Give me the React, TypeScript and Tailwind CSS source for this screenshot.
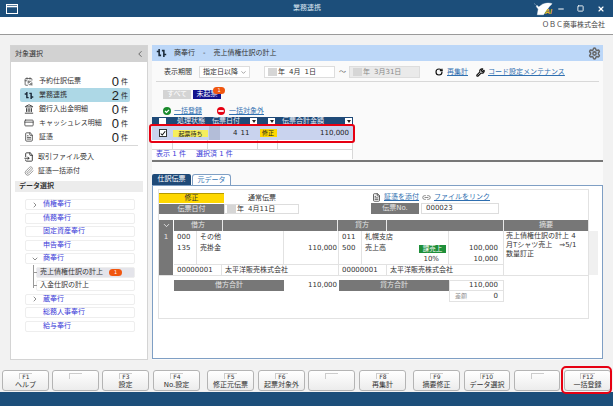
import { CalendarSync, ChevronDown, ChevronRight, ChevronLeft, CreditCard, FileInput, FileText, Landmark, Link2, Minus, Paperclip, RotateCw, Settings, Square, Wrench, X } from 'lucide-react';

const linkCls = 'text-[#2f6fb0] underline';
const grayCell = 'bg-[#777777] text-[#e4e4e4] flex items-center justify-center';

function SyncIcon({ className }: { className?: string }) {
  return (
    <svg viewBox="0 0 14 12" className={className} fill="none" stroke="#1b2b3a" strokeWidth="2">
      <path d="M4 1v8h2.5M1 4h4" />
      <path d="M10 11V3H7.5M13 8H9" />
    </svg>
  );
}

const targets = [
  { label: '予約仕訳伝票', count: '0', icon: <CalendarSync className="w-[9px] h-[9px] text-[#444]" /> },
  { label: '業務連携', count: '2', icon: <SyncIcon className="w-[10px] h-[9px]" />, active: true },
  { label: '銀行入出金明細', count: '0', icon: <Landmark className="w-[10px] h-[10px] text-[#222]" /> },
  { label: 'キャッシュレス明細', count: '0', icon: <CreditCard className="w-[10px] h-[10px] text-[#444]" /> },
  { label: '証憑', count: '0', icon: <FileText className="w-[10px] h-[10px] text-[#444]" /> },
];

const tree = [
  { label: '債権奉行', mark: 'right' },
  { label: '債務奉行' },
  { label: '固定資産奉行' },
  { label: '申告奉行' },
  { label: '商奉行', mark: 'down' },
  { label: '売上債権仕訳の計上', sub: true, active: true },
  { label: '入金仕訳の計上', sub: true },
  { label: '蔵奉行', mark: 'right' },
  { label: '総務人事奉行' },
  { label: '給与奉行' },
];

const keys = [
  { key: 'F1', label: 'ヘルプ', w: 'w-[47px]', ml: 'ml-[2px]' },
  { key: '', label: '', w: 'w-[47px]', ml: 'ml-[3px]' },
  { key: 'F3', label: '設定', w: 'w-[47px]', ml: 'ml-[3px]' },
  { key: 'F4', label: 'No.設定', w: 'w-[47px]', ml: 'ml-[4px]' },
  { key: 'F5', label: '修正元伝票', w: 'w-[47px]', ml: 'ml-[7px]' },
  { key: 'F6', label: '起票対象外', w: 'w-[47px]', ml: 'ml-[4px]' },
  { key: '', label: '', w: 'w-[47px]', ml: 'ml-[3px]' },
  { key: 'F8', label: '再集計', w: 'w-[47px]', ml: 'ml-[4px]' },
  { key: 'F9', label: '摘要修正', w: 'w-[47px]', ml: 'ml-[7px]' },
  { key: 'F10', label: 'データ選択', w: 'w-[46px]', ml: 'ml-[4px]' },
  { key: '', label: '', w: 'w-[46px]', ml: 'ml-[4px]' },
  { key: 'F12', label: '一括登録', w: 'w-[47px]', ml: 'ml-[4px]' },
];

function LeftPanel() {
  return (
    <aside className="w-[138px] h-[315px] bg-white border border-[#d4d4d4] flex flex-col">
      <div className="h-[16px] bg-[#d2d2d2] flex items-center justify-between pl-[4px] pr-[2px] text-[#333]">
        <span>対象選択</span>
        <ChevronLeft className="w-[10px] h-[10px] text-[#555]" />
      </div>
      <div className="mt-[12px] ml-[9px] w-[110px] flex flex-col">
        {targets.map((t) => (
          <div key={t.label} className={`h-[14px] flex items-center pl-[4px] rounded-[2px] ${t.active ? 'bg-[#add8e6]' : ''}`}>
            <span className="w-[15px] shrink-0">{t.icon}</span>
            <span className="flex-1 text-[#333] whitespace-nowrap">{t.label}</span>
            <span className="text-[13px] leading-[13px] text-[#222] font-['Liberation_Sans']">{t.count}</span>
            <span className="ml-[2px] w-[9px] text-[#222] mt-[3px]">件</span>
          </div>
        ))}
      </div>
      <div className="mt-[1px] mx-[9px] h-[1px] bg-[#d8d8d8]" />
      <div className="mt-[4px] ml-[13px] flex flex-col text-[#333]">
        <div className="h-[14px] flex items-center gap-[4px]"><FileInput className="w-[10px] h-[10px] text-[#222]" />取引ファイル受入</div>
        <div className="h-[14px] flex items-center gap-[4px]"><Paperclip className="w-[10px] h-[10px] text-[#888]" />証憑一括添付</div>
      </div>
      <div className="mt-[3px] mx-[4px] h-[11px] bg-[#ececec] flex items-center pl-[4px] font-bold text-[#333]">データ選択</div>
      <div className="mt-[7px] ml-[14px] w-[110px] flex flex-col gap-[2.5px] relative">
        <div className="absolute left-[8px] top-[66px] w-[1px] h-[23px] bg-[#999]" />
        {tree.map((r) => (
          <div
            key={r.label}
            className={`h-[11px] flex items-center border border-[#eeeeee] rounded-[2px] ${r.sub ? 'ml-[11px] pl-[3px] text-[#333]' : 'pl-[17px] text-[#3a3ad8]'} ${r.active ? 'bg-[#e4e4ea]' : 'bg-white'} relative`}
          >
            {r.mark === 'right' && <ChevronRight className="absolute left-[5px] w-[8px] h-[8px] text-[#555]" />}
            {r.mark === 'down' && <ChevronDown className="absolute left-[5px] w-[8px] h-[8px] text-[#555]" />}
            {r.sub && <span className="absolute -left-[3px] w-[3px] h-[1px] bg-[#999]" />}
            <span className="whitespace-nowrap">{r.label}</span>
            {r.active && <span className="ml-[6px] w-[13px] h-[7px] rounded-full bg-[#f0560f] text-white text-[5px] leading-[7px] text-center">1</span>}
          </div>
        ))}
      </div>
    </aside>
  );
}

function DropMark() {
  return (
    <span className="w-[7px] h-[7px] bg-white flex items-center justify-center">
      <span className="w-0 h-0 border-x-[2px] border-x-transparent border-t-[3px] border-t-[#222]" />
    </span>
  );
}

function ListTable() {
  return (
    <div className="relative mt-[1px] w-[201px]">
      <div className="h-[8px] bg-[#1f4a78] text-[#e8eef6] grid grid-cols-[21px_35px_50px_20px_75px] items-center">
        <span className="flex justify-center"><span className="w-[7px] h-[7px] bg-white" /></span>
        <span className="pl-[4px]">処理状態</span>
        <span className="pl-[4px] flex items-center justify-between pr-[1px]">伝票日付<DropMark /></span>
        <span className="flex justify-end pr-[3px]"><DropMark /></span>
        <span className="pl-[4px] flex items-center justify-between pr-[1px]">伝票合計金額<DropMark /></span>
      </div>
      <div className="h-[1px] bg-[#eef0f6]" />
      <div className="h-[14px] bg-[#c9d3ee] grid grid-cols-[21px_35px_50px_20px_75px] items-center text-[#222]">
        <span className="flex justify-center">
          <span className="w-[8px] h-[8px] bg-white border border-[#333] flex items-center justify-center">
            <svg viewBox="0 0 8 8" className="w-[7px] h-[7px]" fill="none" stroke="#111" strokeWidth="1.4"><path d="M1 4l2 2 4-5" /></svg>
          </span>
        </span>
        <span className="flex justify-center"><span className="w-[35px] h-[7px] bg-[#f6ee5c] text-[6px] leading-[7px] text-center">起票待ち</span></span>
        <span className="flex items-center h-full">
          <span className="w-[11px] h-full bg-[#b3bdd8] ml-[1px]" />
          <span className="ml-[13px]">4</span>
          <span className="ml-[3px]">11</span>
        </span>
        <span className="flex justify-center"><span className="w-[17px] h-[8px] bg-[#ffd800] text-[6px] leading-[8px] text-center">修正</span></span>
        <span className="text-right pr-[4px]">110,000</span>
      </div>
      <div className="h-[9px] bg-white grid grid-cols-[21px_35px_50px_20px_75px] border-r border-[#d8d8d8]">
        <span className="border-r border-[#d8d8d8]" />
        <span className="border-r border-[#d8d8d8]" />
        <span className="border-r border-[#d8d8d8]" />
        <span className="border-r border-[#d8d8d8]" />
        <span />
      </div>
      <div className="h-[10px] bg-white border-t border-r border-[#d8d8d8] flex items-center pl-[4px] gap-[10px] text-[#3a3ad8]">
        <span>表示 1 件</span>
        <span>選択済 1 件</span>
      </div>
      <div className="absolute -left-[3px] top-[7px] w-[206px] h-[19px] border-[2.5px] border-[#e60012] rounded-[3px]" />
    </div>
  );
}

function VoucherCard() {
  return (
    <div className="h-[174px] bg-white border border-[#7f9fc4] pl-[5px] pt-[3px]">
      <div className="w-[431px] h-[130px] border border-[#e2e2e2] flex flex-col">
        <div className="flex h-[21px] mt-[3px]">
          <div className="w-[65px] flex flex-col gap-[1px]">
            <div className="h-[10px] bg-[#ffd800] border-t border-[#b59a00] text-[#333] flex items-center justify-center">修正</div>
            <div className={`${grayCell} h-[10px]`}>伝票日付</div>
          </div>
          <div className="w-[75px] flex flex-col gap-[1px]">
            <div className="h-[10px] pl-[24px] text-[#333] flex items-center whitespace-nowrap">通常伝票</div>
            <div className="h-[10px] border border-[#dddddd] flex items-center text-[#333]">
              <span className="w-[9px] h-[8px] bg-[#d6d6d6] ml-[2px]" />
              <span className="ml-[1px]">年</span>
              <span className="ml-[4px]">4月11日</span>
            </div>
          </div>
          <div className="ml-[72px] w-[135px] flex flex-col gap-[1px]">
            <div className="h-[10px] flex items-center whitespace-nowrap -mt-[1px]">
              <FileText className="w-[9px] h-[9px] text-[#333] mr-[3px] ml-[1px]" />
              <span className={linkCls}>証憑を添付</span>
              <Link2 className="w-[9px] h-[9px] text-[#666] mx-[3px]" />
              <span className={linkCls}>ファイルをリンク</span>
            </div>
            <div className="flex h-[11px]">
              <div className={`${grayCell} w-[48px]`}>伝票No.</div>
              <div className="ml-[2px] w-[78px] border border-[#dddddd] pl-[4px] flex items-center text-[#333]">000023</div>
            </div>
          </div>
        </div>

        <div className="mt-[6px] h-[11px] grid grid-cols-[14px_1px_49px_115px_49px_117px_84px] gap-0">
          <div className={grayCell}><ChevronDown className="w-[9px] h-[9px] text-white" /></div>
          <div />
          <div className={`${grayCell} border-r border-[#e8e8e8]`}>借方</div>
          <div className={`${grayCell} border-r border-[#e8e8e8]`} />
          <div className={`${grayCell} border-r border-[#e8e8e8]`}>貸方</div>
          <div className={`${grayCell} border-r border-[#e8e8e8]`} />
          <div className={grayCell}>摘要</div>
        </div>

        <div className="flex text-[#333]">
          <div className="w-[14px] bg-[#777777] text-[#e8e8e8] text-center pt-[3px] h-[44px]">1</div>
          <div className="w-[330px] ml-[1px]">
            <div className="h-[34px] grid grid-cols-[23px_87px_55px_23px_87px_55px] border-b border-[#e2e2e2]">
              <div className="border-r border-[#e2e2e2] pl-[3px] pt-[1px] leading-[11px]"><div>000</div><div>135</div></div>
              <div className="border-r border-[#e2e2e2] pl-[3px] pt-[1px] leading-[11px]"><div>その他</div><div>売掛金</div></div>
              <div className="border-r border-[#e2e2e2] text-right pr-[1px] pt-[12px] leading-[11px]">110,000</div>
              <div className="border-r border-[#e2e2e2] pl-[3px] pt-[1px] leading-[11px]"><div>011</div><div>500</div></div>
              <div className="border-r border-[#e2e2e2] pl-[3px] pt-[1px] leading-[11px]">
                <div>札幌支店</div>
                <div className="flex justify-between pr-[2px] items-center">
                  <span>売上高</span>
                  <span className="w-[27px] h-[8px] bg-[#1f8f3a] text-white text-[6.5px] leading-[8px] text-center">課売上</span>
                </div>
                <div className="text-right pr-[9px]">10%</div>
              </div>
              <div className="text-right pr-[5px] pt-[12px] leading-[11px] border-r border-[#e2e2e2]"><div>100,000</div><div>10,000</div></div>
            </div>
            <div className="h-[10px] grid grid-cols-[48px_117px_48px_117px] items-center">
              <div className="border-r border-[#e2e2e2] pl-[3px] h-full flex items-center">00000001</div>
              <div className="border-r border-[#e2e2e2] pl-[3px] h-full flex items-center whitespace-nowrap">太平洋販売株式会社</div>
              <div className="border-r border-[#e2e2e2] pl-[3px] h-full flex items-center">00000001</div>
              <div className="border-r border-[#e2e2e2] pl-[3px] h-full flex items-center whitespace-nowrap">太平洋販売株式会社</div>
            </div>
          </div>
          <div className="w-[84px] pl-[2px] pt-[1px] leading-[9px] relative whitespace-nowrap">
            売上債権仕訳の計上 4<br />月Tシャツ売上　⇒5/1<br />数量訂正
            <div className="absolute -right-[10px] top-0 w-[9px] h-[44px] bg-[#f0f0f0]" />
          </div>
        </div>

        <div className="border-t border-[#e2e2e2] mt-[0px] pt-[4px] pl-[15px] text-[#333]">
          <div className="flex h-[11px]">
            <div className={`${grayCell} w-[110px]`}>借方合計</div>
            <div className="w-[55px] text-right pr-[2px] flex items-center justify-end">110,000</div>
            <div className={`${grayCell} w-[110px]`}>貸方合計</div>
            <div className="w-[55px] pr-[5px] border border-[#e2e2e2] flex items-center justify-end">110,000</div>
          </div>
          <div className="flex h-[11px]">
            <div className="w-[275px]" />
            <div className="w-[55px] px-[5px] border border-t-0 border-[#e2e2e2] flex items-center justify-between">
              <span className="text-[#999] text-[6px]">差額</span>
              <span>0</span>
            </div>
          </div>
        </div>
      </div>
    </div>
  );
}

function RightPanel() {
  return (
    <main className="w-[451px] h-[315px] flex flex-col bg-[#fafafa]">
      <div className="h-[16px] bg-[#bcd7f8] flex items-center pl-[4px] pr-[2px] text-[#333]">
        <SyncIcon className="w-[11px] h-[10px]" />
        <span className="ml-[7px]">商奉行</span>
        <span className="ml-[8px]">-</span>
        <span className="ml-[8px]">売上債権仕訳の計上</span>
        <Settings className="ml-auto w-[13px] h-[13px] text-[#666]" strokeWidth={2.8} />
      </div>

      <div className="mt-[5px] h-[12px] flex items-center text-[#333]">
        <span className="ml-[12px]">表示期間</span>
        <div className="ml-[7px] w-[51px] h-[12px] border border-[#dddddd] bg-white flex items-center justify-between pl-[3px] pr-[2px]">
          指定日以降<ChevronDown className="w-[7px] h-[7px] text-[#666]" />
        </div>
        <div className="ml-[14px] w-[71px] h-[12px] border border-[#dddddd] bg-white flex items-center">
          <span className="w-[9px] h-[8px] bg-[#d6d6d6] ml-[3px]" />
          <span className="ml-[1px]">年</span>
          <span className="ml-[4px]">4月</span>
          <span className="ml-[4px]">1日</span>
        </div>
        <span className="ml-[4px] text-[#666]">～</span>
        <div className="ml-[3px] w-[71px] h-[12px] border border-[#dddddd] bg-[#eaeaea] flex items-center text-[#888]">
          <span className="w-[9px] h-[8px] bg-[#d6d6d6] ml-[3px]" />
          <span className="ml-[1px]">年</span>
          <span className="ml-[4px]">3月31日</span>
        </div>
        <RotateCw className="ml-[15px] w-[8px] h-[8px] text-[#111]" strokeWidth={3.5} />
        <span className={`${linkCls} ml-[4px]`}>再集計</span>
        <Wrench className="ml-[8px] w-[9px] h-[9px] text-[#111]" strokeWidth={3} />
        <span className={`${linkCls} ml-[3px] whitespace-nowrap`}>コード設定メンテナンス</span>
      </div>
      <div className="mt-[3px] ml-[4px] w-[443px] h-[1px] bg-[#d8d8d8]" />

      <div className="mt-[8px] h-[9px] ml-[11px] flex gap-[2px] relative">
        <span className="w-[28px] bg-[#d4d4d4] text-white leading-[9px] text-center">すべて</span>
        <span className="w-[28px] bg-[#12128c] text-white leading-[9px] text-center">未起票</span>
        <span className="absolute left-[50px] -top-[3px] w-[12px] h-[7px] rounded-full bg-[#f0560f] text-white text-[5px] leading-[7px] text-center">1</span>
      </div>

      <div className="mt-[7px] h-[10px] flex items-center ml-[11px]">
        <svg viewBox="0 0 8 8" className="w-[8px] h-[8px]"><circle cx="4" cy="4" r="4" fill="#1a8a2c" /><path d="M2 4l1.5 1.5L6 2.8" fill="none" stroke="#fff" strokeWidth="1.2" /></svg>
        <span className={`${linkCls} ml-[3px]`}>一括登録</span>
        <svg viewBox="0 0 8 8" className="w-[8px] h-[8px] ml-[15px]"><circle cx="4" cy="4" r="4" fill="#e60012" /><rect x="1.3" y="3.1" width="5.4" height="1.8" fill="#fff" /></svg>
        <span className={`${linkCls} ml-[4px]`}>一括対象外</span>
      </div>

      <ListTable />
      <div className="mt-[1px] h-[2px] bg-[#777777]" />

      <div className="mt-[12px] h-[11px] flex gap-[1px]">
        <span className="w-[39px] bg-[#1f4a78] text-white rounded-t-[2px] leading-[11px] text-center">仕訳伝票</span>
        <span className="w-[39px] bg-white text-[#3a7ab8] border border-b-0 border-[#7f9fc4] rounded-t-[3px] leading-[10px] text-center">元データ</span>
      </div>
      <VoucherCard />
    </main>
  );
}

export default function App() {
  return (
    <div className="w-[613px] h-[406px] overflow-hidden flex flex-col bg-[#f2f2f2] text-[7px] leading-none font-['DejaVu_Sans','Noto_Sans_CJK_JP',sans-serif]">
      <header className="h-[17px] bg-[#1c4e7a] flex items-center text-white shrink-0 relative">
        <svg viewBox="0 0 12 10" className="ml-[6px] w-[12px] h-[10px]" fill="none" stroke="#fff" strokeWidth="1"><rect x="0.5" y="0.5" width="11" height="9" /><path d="M0.5 2.5h11" strokeWidth="1.6" /></svg>
        <span className="absolute left-[293px] text-[#d8e4ef]">業務連携</span>
        <div className="ml-auto flex items-center">
          <svg viewBox="0 0 20 14" className="w-[19px] h-[14px]">
            <path d="M0 1l1.5 1.5M3 3l2 2 4-3c4-1.5 8-1.5 10-.5l-3 3-6 8.500H3.500l1-6-2-2.500z" fill="#fff" stroke="#fff" strokeWidth="0.5" />
          </svg>
          <span className="-ml-[8px] mt-[5px] text-[7px] italic font-bold text-[#e8b820] font-['Liberation_Sans']">AI</span>
          <Minus className="ml-[5px] w-[8px] h-[8px]" strokeWidth={3} />
          <Square className="ml-[12px] w-[7px] h-[7px]" strokeWidth={3} />
          <X className="ml-[13px] mr-[8px] w-[8px] h-[8px]" strokeWidth={3.5} />
        </div>
      </header>
      <div className="h-[18px] bg-white border-b border-[#9a9a9a] flex items-center justify-end pr-[8px] text-[#444] shrink-0">
        ＯＢＣ商事株式会社
      </div>

      <div className="flex gap-[4px] pl-[10px] pt-[10px] h-[335px] shrink-0">
        <LeftPanel />
        <RightPanel />
      </div>

      <div className="h-[22px] flex shrink-0 relative">
        {keys.map((k, i) => (
          <button key={i} className={`${k.w} ${k.ml} h-[21px] border border-[#b4b4b4] rounded-[3px] bg-gradient-to-b from-white to-[#ececec] flex flex-col items-center text-[#333]`}>
            <span className="h-[6px] min-w-[13px] mt-[2px] border-l border-t border-[#cccccc] text-[6px] leading-[6px] px-[1px]">{k.key}</span>
            <span className="mt-[3px] whitespace-nowrap text-[7px]">{k.label}</span>
          </button>
        ))}
        <div className="absolute left-[561px] -top-[4px] w-[51px] h-[28px] border-[2.5px] border-[#e60012] rounded-[5px]" />
      </div>
      <div className="flex-1 bg-[#1c4e7a]" />
    </div>
  );
}
